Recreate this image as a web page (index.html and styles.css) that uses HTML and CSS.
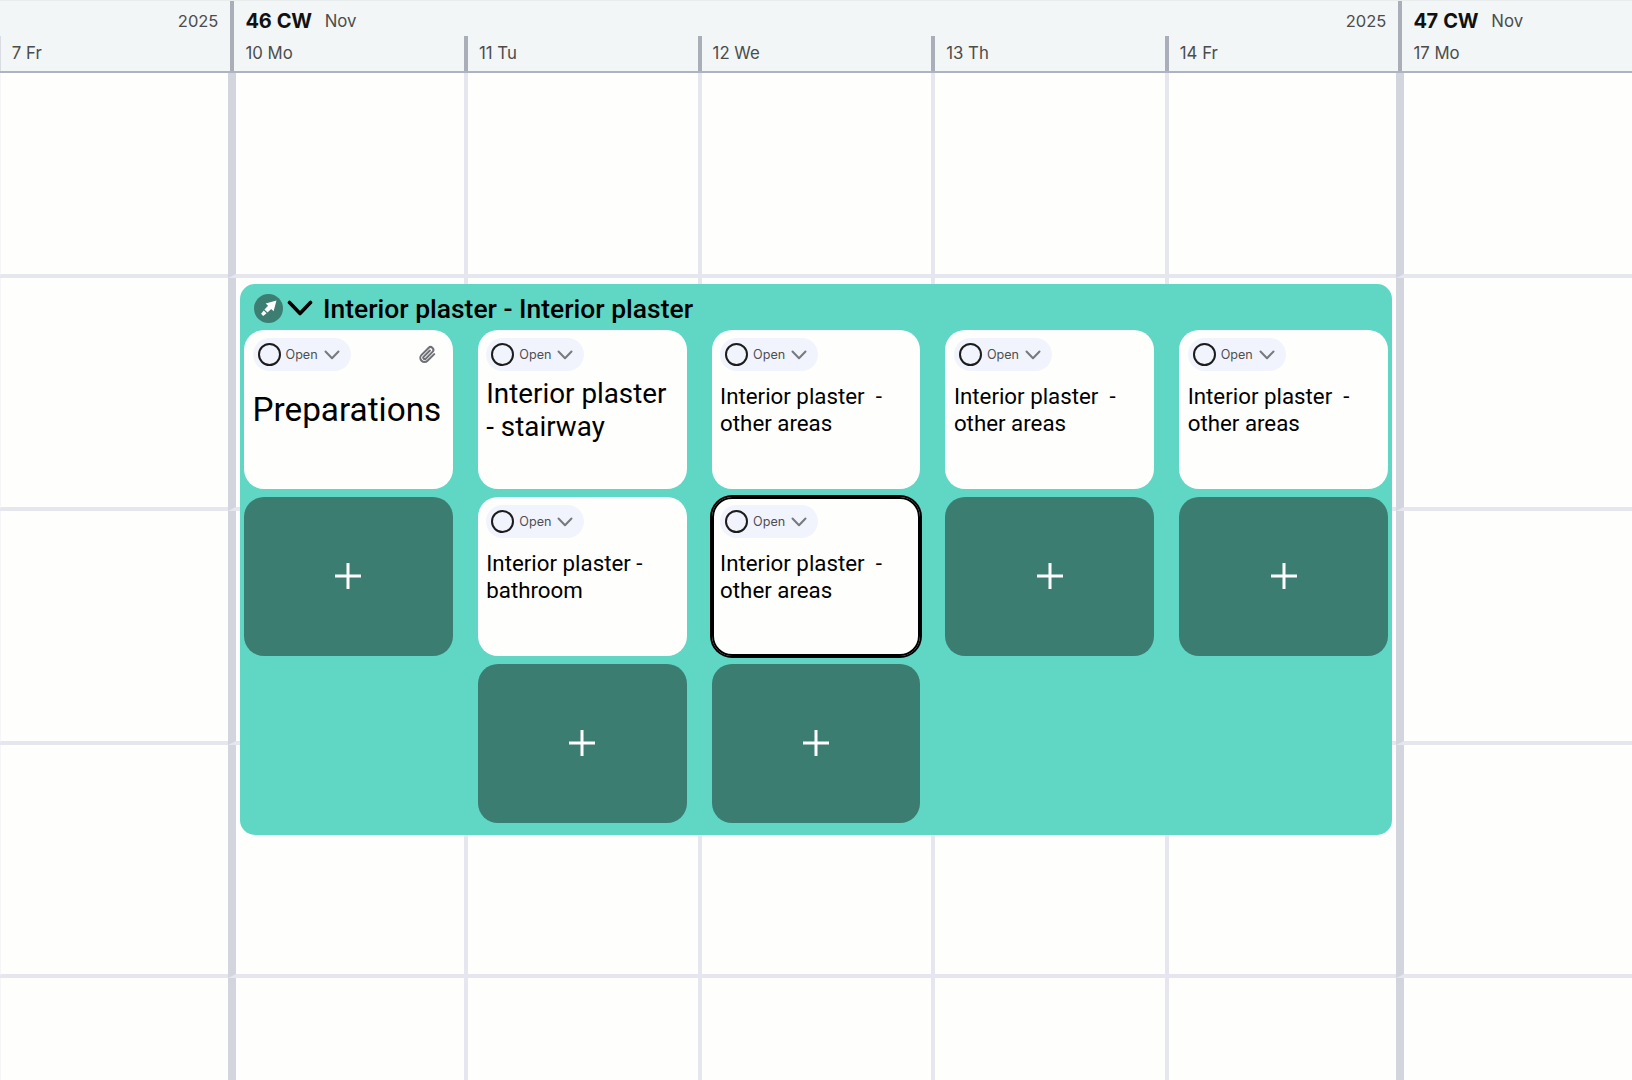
FILE: index.html
```html
<!DOCTYPE html>
<html lang="en">
<head>
<meta charset="utf-8">
<title>Calendar</title>
<link rel="stylesheet" href="styles.css">
</head>
<body>
<svg class="defs" width="0" height="0" aria-hidden="true">
  <defs>
    <symbol id="chev" viewBox="0 0 16 10"><path d="M1.500 1.500 8 8.300l6.500-6.800" fill="none" stroke="currentColor" stroke-width="2" stroke-linecap="round" stroke-linejoin="round"/></symbol>
    <symbol id="plus" viewBox="0 0 28 28"><path d="M14 1v26M1 14h26" fill="none" stroke="currentColor" stroke-width="3"/></symbol>
  </defs>
</svg>
<div class="calendar">
  <header class="head">
    <div class="week week-1"><span class="year">2025</span></div>
    <div class="week week-5"><span class="cw">46 CW</span><span class="month">Nov</span><span class="year">2025</span></div>
    <div class="week week-1"><span class="cw">47 CW</span><span class="month">Nov</span></div>
    <div class="day">7 Fr</div>
    <div class="day">10 Mo</div>
    <div class="day">11 Tu</div>
    <div class="day">12 We</div>
    <div class="day">13 Th</div>
    <div class="day">14 Fr</div>
    <div class="day">17 Mo</div>
  </header>
  <div class="board">
    <div class="grid">
      <div class="cell"></div><div class="cell wk"></div><div class="cell"></div><div class="cell"></div><div class="cell"></div><div class="cell"></div><div class="cell wk"></div>
      <div class="cell"></div><div class="cell wk"></div><div class="cell"></div><div class="cell"></div><div class="cell"></div><div class="cell"></div><div class="cell wk"></div>
      <div class="cell"></div><div class="cell wk"></div><div class="cell"></div><div class="cell"></div><div class="cell"></div><div class="cell"></div><div class="cell wk"></div>
      <div class="cell"></div><div class="cell wk"></div><div class="cell"></div><div class="cell"></div><div class="cell"></div><div class="cell"></div><div class="cell wk"></div>
      <div class="cell"></div><div class="cell wk"></div><div class="cell"></div><div class="cell"></div><div class="cell"></div><div class="cell"></div><div class="cell wk"></div>
    </div>
    <section class="group">
      <div class="group-head">
        <span class="badge"><svg viewBox="0 0 16 16" width="17" height="17"><path d="M15.500.5 5.300 3.200l2.300 2.300-3.400 3.400 2.900 2.900 3.400-3.400 2.300 2.300z" fill="#fff"/><path d="M3.500 9.800 6.200 12.500 3 15 1 13z" fill="#fff"/></svg></span>
        <svg class="group-chev" viewBox="0 0 26 16" width="26" height="16"><path d="M2.500 2.500 13 13.500 23.500 2.500" fill="none" stroke="#000" stroke-width="3.600" stroke-linecap="round" stroke-linejoin="round"/></svg>
        <h2 class="group-title">Interior plaster - Interior plaster</h2>
      </div>
      <div class="columns">
        <div class="column">
          <article class="card">
            <div class="card-top">
              <div class="status"><span class="ring"></span><span class="status-text">Open</span><svg class="status-chev"><use href="#chev"/></svg></div>
              <svg class="clip" viewBox="0 0 24 24" width="19" height="19"><path d="M20.500 11.500 12 20a5.300 5.300 0 0 1-7.500-7.500l8.800-8.800a3.500 3.500 0 0 1 5 5l-8.800 8.800a1.800 1.800 0 0 1-2.500-2.500l8-8" fill="none" stroke="#6f7176" stroke-width="2.600" stroke-linecap="round"/></svg>
            </div>
            <div class="title title-xl">Preparations</div>
          </article>
          <button class="add"><svg class="plus"><use href="#plus"/></svg></button>
        </div>
        <div class="column">
          <article class="card">
            <div class="card-top"><div class="status"><span class="ring"></span><span class="status-text">Open</span><svg class="status-chev"><use href="#chev"/></svg></div></div>
            <div class="title title-lg">Interior plaster - stairway</div>
          </article>
          <article class="card">
            <div class="card-top"><div class="status"><span class="ring"></span><span class="status-text">Open</span><svg class="status-chev"><use href="#chev"/></svg></div></div>
            <div class="title title-md">Interior plaster - bathroom</div>
          </article>
          <button class="add"><svg class="plus"><use href="#plus"/></svg></button>
        </div>
        <div class="column">
          <article class="card">
            <div class="card-top"><div class="status"><span class="ring"></span><span class="status-text">Open</span><svg class="status-chev"><use href="#chev"/></svg></div></div>
            <div class="title title-md">Interior plaster&nbsp; - other areas</div>
          </article>
          <article class="card selected">
            <div class="card-top"><div class="status"><span class="ring"></span><span class="status-text">Open</span><svg class="status-chev"><use href="#chev"/></svg></div></div>
            <div class="title title-md">Interior plaster&nbsp; - other areas</div>
          </article>
          <button class="add"><svg class="plus"><use href="#plus"/></svg></button>
        </div>
        <div class="column">
          <article class="card">
            <div class="card-top"><div class="status"><span class="ring"></span><span class="status-text">Open</span><svg class="status-chev"><use href="#chev"/></svg></div></div>
            <div class="title title-md">Interior plaster&nbsp; - other areas</div>
          </article>
          <button class="add"><svg class="plus"><use href="#plus"/></svg></button>
        </div>
        <div class="column">
          <article class="card">
            <div class="card-top"><div class="status"><span class="ring"></span><span class="status-text">Open</span><svg class="status-chev"><use href="#chev"/></svg></div></div>
            <div class="title title-md">Interior plaster&nbsp; - other areas</div>
          </article>
          <button class="add"><svg class="plus"><use href="#plus"/></svg></button>
        </div>
      </div>
    </section>
  </div>
</div>
</body>
</html>
```
FILE: styles.css
```css
* { box-sizing: border-box; }
html, body { margin: 0; height: 100%; overflow: hidden; background: #fefefd; }
body { font-family: Inter, "Liberation Sans", sans-serif; color: #000; }
.defs { position: absolute; }
.calendar { width: 1632px; height: 1080px; overflow: hidden; position: relative; }

.head {
  display: grid;
  grid-template-columns: repeat(7, 233.6px);
  grid-template-rows: 35px 38px;
  margin-left: -3.2px;
  width: 1640px;
  height: 73px;
  background: #f2f6f6;
  border-top: 1px solid #e8eced;
  position: relative;
}
.head::after {
  content: "";
  position: absolute;
  left: 0; right: 0; bottom: 0;
  height: 2px;
  background: #adb3bf;
}
.week {
  display: flex;
  align-items: center;
  border-left: 4px solid #a9aeb9;
  padding: 5px 12px 0 11px;
  color: #4c4c4c;
  white-space: nowrap;
}
.week-5 { grid-column: span 5; }
.week:first-child { border-left-color: transparent; }
.cw { font-size: 20px; font-weight: 700; color: #111; letter-spacing: -0.3px; word-spacing: 1px; }
.month { font-size: 16.800px; margin-left: 13px; }
.year { font-size: 16.500px; margin-left: auto; }
.day {
  border-left: 4px solid #a9aeb9;
  padding: 1.500px 0 0 11px;
  font-size: 16.800px;
  line-height: 30px;
  color: #4c4c4c;
}
.day:nth-child(4) { border-left-color: #d9dde2; }

.board { position: relative; height: 1007px; overflow: hidden; }
.grid {
  display: grid;
  grid-template-columns: repeat(7, 233.6px);
  grid-auto-rows: 233.6px;
  margin: -29px 0 0 -3.2px;
  width: 1640px;
}
.cell { border-left: 4px solid #e6e7ee; border-bottom: 4px solid #e6e7ee; }
.cell:nth-child(7n+1) { border-left-color: #f6f6f8; }
.cell.wk { border-left: 8px solid #d2d5de; margin-left: -2px; }

.group {
  position: absolute;
  left: 240px;
  top: 211px;
  width: 1152px;
  height: 551px;
  padding: 0 4px;
  background: #60d6c4;
  border-radius: 15px;
}
.group-head { display: flex; align-items: center; height: 46px; padding: 2px 0 0 10px; }
.badge {
  width: 29px; height: 29px;
  border-radius: 50%;
  background: #3c7e72;
  display: flex; align-items: center; justify-content: center;
  flex: none;
}
.group-chev { margin-left: 4px; flex: none; }
.group-title {
  margin: 0 0 0 10px;
  font-family: Roboto, sans-serif;
  font-size: 26.450px;
  font-weight: 500;
  color: #000;
  white-space: nowrap;
}
.columns { display: flex; gap: 25px; }
.column { width: 208.8px; display: flex; flex-direction: column; gap: 8px; }
.card {
  height: 159px;
  background: #fefefd;
  border-radius: 20px;
  padding: 8px 8.500px 0;
  font-family: Roboto, sans-serif;
}
.card.selected { box-shadow: 0 0 0 2px #000, inset 0 0 0 2px #000; }
.card-top { display: flex; align-items: center; justify-content: space-between; padding-right: 7px; }
.status {
  display: flex; align-items: center;
  width: 98px; height: 33px;
  border-radius: 17px;
  background: #f1f4fd;
  padding-left: 5px;
}
.ring { width: 23px; height: 23px; border: 2.500px solid #1c1c1c; border-radius: 50%; flex: none; }
.status-text { font-family: Inter, sans-serif; font-size: 12.600px; color: #4e4e52; margin-left: 5px; }
.status-chev { width: 16px; height: 10px; margin-left: 6px; color: #77797d; flex: none; }
.title { height: 78px; display: flex; align-items: center; }
.title-xl { font-size: 33.300px; line-height: 38px; }
.title-lg { font-size: 27.800px; line-height: 33px; }
.title-md { font-size: 22.300px; line-height: 27px; }
.add {
  height: 159px;
  border: 0;
  padding: 0 0 2px;
  background: #3c7d72;
  border-radius: 20px;
  display: flex; align-items: center; justify-content: center;
  color: #fff;
}
.plus { width: 28px; height: 28px; }
```
